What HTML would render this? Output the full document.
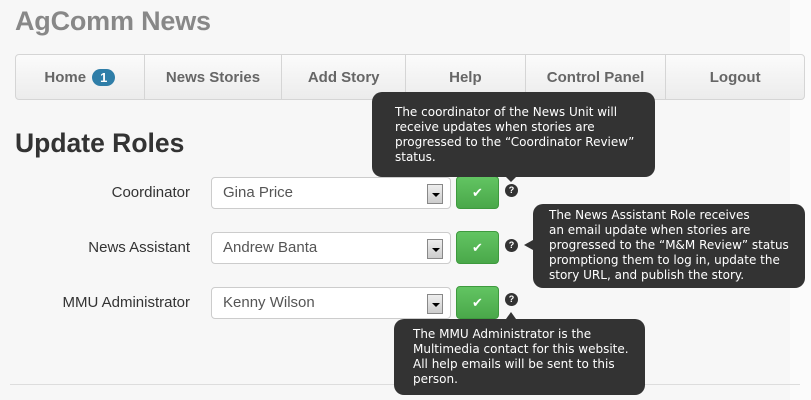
<!DOCTYPE html>
<html><head><meta charset="utf-8"><style>
*{margin:0;padding:0;box-sizing:border-box}
body{width:811px;height:400px;overflow:hidden;background:#f7f7f7;font-family:"Liberation Sans",Arial,sans-serif;position:relative}
.a{position:absolute}
h1{position:absolute;left:15px;top:6px;font-size:27px;color:#888;font-weight:bold;letter-spacing:-0.2px}
h2{position:absolute;left:15px;top:128px;font-size:26.5px;color:#333;font-weight:bold}
.nav{left:15px;top:54px;width:790px;height:46px;border:1px solid #d5d5d5;border-radius:4px;background:linear-gradient(#fbfbfb,#ececec);display:flex}
.nav div{height:100%;display:flex;align-items:center;justify-content:center;font-weight:bold;font-size:15px;color:#666;border-right:1px solid #d5d5d5}
.nav div:last-child{border-right:none}
.badge{background:#2f7ea8;color:#fff;border-radius:10px;font-size:13px;padding:1px 8px;margin-left:6px}
.lbl{width:175px;text-align:right;font-size:15px;color:#333;left:15px}
.sel{left:211px;width:240px;height:32px;border:1px solid #ccc;border-radius:4px;background:#fff;font-size:15px;color:#555;padding:6px 11px}
.dd{position:absolute;right:7px;top:6px;width:16px;height:20px;border:1px solid #888;background:linear-gradient(#eee,#ccc)}
.dd:after{content:"";position:absolute;left:4px;top:8px;border-left:4px solid transparent;border-right:4px solid transparent;border-top:4px solid #000}
.btn{left:456px;width:43px;height:33px;border-radius:4px;background:linear-gradient(#62c462,#4aa84a);border:1px solid #3e9a3e;color:#fff;font-size:13px;text-align:center;line-height:31px}
.q{left:505px;width:13px;height:13px;border-radius:50%;background:#333;color:#fff;font-size:9px;font-weight:bold;text-align:center;line-height:13px}
.tip{background:#333;color:#fff;border-radius:10px;font-family:"DejaVu Sans",Verdana,sans-serif;font-size:12px;line-height:15px}
</style></head><body>
<div class="a" style="left:790px;top:0;width:21px;height:400px;background:#fbfbfb"></div>
<h1>AgComm News</h1>
<div class="a nav">
<div style="width:129px">Home<span class="badge">1</span></div>
<div style="width:138px">News Stories</div>
<div style="width:124px">Add Story</div>
<div style="width:120px">Help</div>
<div style="width:141px">Control Panel</div>
<div style="width:138px">Logout</div>
</div>
<h2>Update Roles</h2>

<div class="a lbl" style="top:184px">Coordinator</div>
<div class="a sel" style="top:177px">Gina Price<span class="dd"></span></div>
<div class="a btn" style="top:176px">✔</div>
<div class="a q" style="top:184px">?</div>

<div class="a lbl" style="top:239px">News Assistant</div>
<div class="a sel" style="top:232px">Andrew Banta<span class="dd"></span></div>
<div class="a btn" style="top:231px">✔</div>
<div class="a q" style="top:239px">?</div>

<div class="a lbl" style="top:294px">MMU Administrator</div>
<div class="a sel" style="top:287px">Kenny Wilson<span class="dd"></span></div>
<div class="a btn" style="top:286px">✔</div>
<div class="a q" style="top:293px">?</div>

<div class="a" style="left:10px;top:384px;width:790px;border-top:1px solid #ddd"></div>

<div class="a tip" style="left:372px;top:92px;width:283px;height:85px;padding:13px 0 0 23px">The coordinator of the News Unit will<br>receive updates when stories are<br>progressed to the “Coordinator Review”<br>status.</div>
<div class="a" style="left:506px;top:177px;border-left:5px solid transparent;border-right:5px solid transparent;border-top:5px solid #333"></div>

<div class="a tip" style="left:533px;top:204px;width:272px;height:84px;padding:4px 0 0 16px">The News Assistant Role receives<br>an email update when stories are<br>progressed to the “M&amp;M Review” status<br>promptiong them to log in, update the<br>story URL, and publish the story.</div>
<div class="a" style="left:524px;top:240px;border-top:5px solid transparent;border-bottom:5px solid transparent;border-right:9px solid #333"></div>

<div class="a tip" style="left:394px;top:319px;width:251px;height:76px;padding:8px 0 0 19px">The MMU Administrator is the<br>Multimedia contact for this website.<br>All help emails will be sent to this<br>person.</div>
<div class="a" style="left:506px;top:312px;border-left:5px solid transparent;border-right:5px solid transparent;border-bottom:7px solid #333"></div>
</body></html>
